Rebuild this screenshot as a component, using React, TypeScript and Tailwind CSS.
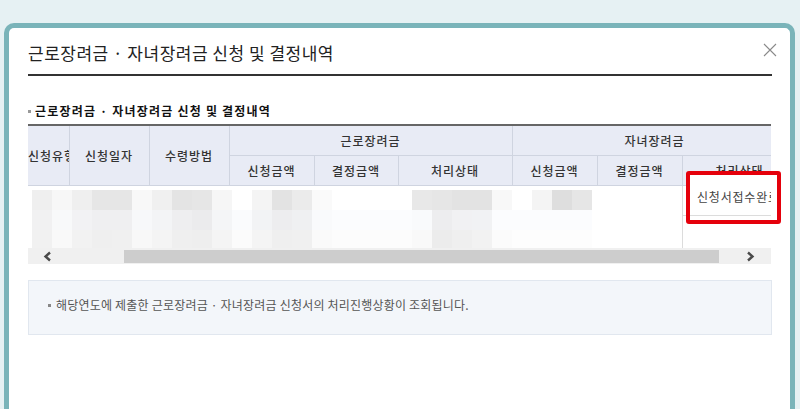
import React from 'react';

const rowA = [
  'bg-[#efefef]', 'bg-[#f7f7f7]', 'bg-[#efefef]', 'bg-[#e6e6e6]', 'bg-[#e6e6e6]', 'bg-[#f8f8f8]', 'bg-[#f0f0f0]',
  'bg-[#e4e4e4]', 'bg-[#e6e6e6]', 'bg-[#f6f6f6]', 'bg-[#ffffff]', 'bg-[#f4f4f4]', 'bg-[#e3e3e3]', 'bg-[#ebebeb]',
  'bg-[#fafafa]', 'bg-[#ffffff]', 'bg-[#ffffff]', 'bg-[#ffffff]', 'bg-[#ffffff]', 'bg-[#e8e8e8]', 'bg-[#e6e6e6]',
  'bg-[#e3e3e3]', 'bg-[#e3e3e3]', 'bg-[#f8f8f8]', 'bg-[#ffffff]', 'bg-[#f4f4f4]', 'bg-[#dedede]', 'bg-[#e6e6e6]',
];
const rowB = [
  'bg-[#f1f1f2]', 'bg-[#f8f9fa]', 'bg-[#f2f2f4]', 'bg-[#efeff1]', 'bg-[#efeff1]', 'bg-[#f7f8fa]', 'bg-[#f3f4f6]',
  'bg-[#eeeef0]', 'bg-[#ebebed]', 'bg-[#f4f5f7]', 'bg-[#fafbfd]', 'bg-[#f2f3f5]', 'bg-[#ededef]', 'bg-[#eff0f2]',
  'bg-[#f9fafc]', 'bg-[#fbfcfe]', 'bg-[#fbfcfe]', 'bg-[#fbfcfe]', 'bg-[#fbfcfe]', 'bg-[#f9fafc]', 'bg-[#ededef]',
  'bg-[#f1f1f3]', 'bg-[#f1f2f4]', 'bg-[#fbfcfe]', 'bg-[#fbfcfe]', 'bg-[#fbfcfe]', 'bg-[#fbfcfe]', 'bg-[#fbfcfe]',
];
const rowC = [
  'bg-[#f1f1f1]', 'bg-[#f9f9f9]', 'bg-[#f2f2f2]', 'bg-[#efefef]', 'bg-[#f0f0f0]', 'bg-[#f8f8f8]', 'bg-[#f4f4f4]',
  'bg-[#efefef]', 'bg-[#eeeeee]', 'bg-[#f4f4f4]', 'bg-[#fbfbfb]', 'bg-[#f4f4f4]', 'bg-[#efefef]', 'bg-[#f0f0f0]',
  'bg-[#fafafa]', 'bg-[#fcfcfc]', 'bg-[#fcfcfc]', 'bg-[#fcfcfc]', 'bg-[#fcfcfc]', 'bg-[#f9f9f9]', 'bg-[#ececec]',
  'bg-[#efefef]', 'bg-[#f2f2f2]', 'bg-[#fbfbfb]', 'bg-[#fdfdfd]', 'bg-[#fdfdfd]', 'bg-[#fdfdfd]', 'bg-[#fdfdfd]',
];

const font = "font-['Noto_Sans_CJK_KR','Noto_Sans',sans-serif]";
const th = 'border border-[#cfd4e0] bg-[#e8ebf5] text-[12px] font-medium text-[#333] tracking-[1px] whitespace-nowrap overflow-hidden p-0';

export default function App() {
  return (
    <div className={`w-[800px] h-[409px] overflow-hidden bg-[#e6f1f3] pt-[23px] pl-[4px] ${font}`}>
      <div className="relative w-[791px] h-[400px] rounded-t-[10px] border-[5px] border-b-0 border-[#7ab4b9] bg-white pl-[19px] pr-[18px]">
        {/* header */}
        <div className="flex items-center justify-between border-b-2 border-[#333] pt-[13px] pb-[9px]">
          <h1 className="text-[17px] leading-[24px] text-[#222] tracking-[0.5px]">근로장려금 · 자녀장려금 신청 및 결정내역</h1>
          <button className="-mr-[5px] mb-[6px] text-[#8a8a8a]">
            <svg width="14" height="14" viewBox="0 0 14 14" stroke="currentColor" strokeWidth="1.1">
              <path d="M1 1L13 13M13 1L1 13" />
            </svg>
          </button>
        </div>

        <div className="mt-[27px] mb-[5px] flex items-center gap-[4px] text-[12px] leading-[16px] font-bold text-[#111] tracking-[1.2px]">
          <span className="w-[3px] h-[3px] bg-[#999]" />
          <span>근로장려금 · 자녀장려금 신청 및 결정내역</span>
        </div>

        {/* table */}
        <div className="w-[743px] overflow-hidden border-t-2 border-[#666]">
          <table className="table-fixed border-collapse w-[769px] -mt-px">
            <colgroup>
              <col className="w-[41px]" />
              <col className="w-[80px]" />
              <col className="w-[80px]" />
              <col className="w-[85px]" />
              <col className="w-[84px]" />
              <col className="w-[114px]" />
              <col className="w-[85px]" />
              <col className="w-[85px]" />
              <col className="w-[115px]" />
            </colgroup>
            <thead>
              <tr className="h-[30px]">
                <th rowSpan={2} className={`${th} border-l-0 text-left`}>신청유형</th>
                <th rowSpan={2} className={th}>신청일자</th>
                <th rowSpan={2} className={th}>수령방법</th>
                <th colSpan={3} className={th}>근로장려금</th>
                <th colSpan={3} className={th}>자녀장려금</th>
              </tr>
              <tr className="h-[30px]">
                <th className={th}>신청금액</th>
                <th className={th}>결정금액</th>
                <th className={th}>처리상태</th>
                <th className={th}>신청금액</th>
                <th className={th}>결정금액</th>
                <th className={th}>처리상태</th>
              </tr>
            </thead>
          </table>
          <div className="flex h-[62px]">
            <div className="w-[654px] shrink-0 pt-[4px] pl-[4px] flex flex-col">
              {[{ r: rowA, h: 'h-[20px]' }, { r: rowB, h: 'h-[20px]' }, { r: rowC, h: 'h-[18px]' }].map((row, i) => (
                <div key={i} className="flex">
                  {row.r.map((c, j) => (
                    <div key={j} className={`w-[20px] ${row.h} ${c}`} />
                  ))}
                </div>
              ))}
            </div>
            <div className="w-[115px] shrink-0 border-l border-[#dcdcdc] flex flex-col">
              <div className="h-[30px] border-b border-[#dcdcdc]" />
              <div className="flex-1" />
            </div>
          </div>
          {/* scrollbar */}
          <div className="flex items-center h-[16px] bg-[#f0f0f0]">
            <div className="w-[96px] shrink-0 flex items-center pl-[15px]">
              <svg width="9" height="11" viewBox="0 0 9 11" fill="none" stroke="#4a4a4a" strokeWidth="2.4">
                <path d="M7 1.5L2.5 5.5L7 9.5" />
              </svg>
            </div>
            <div className="w-[595px] shrink-0 h-[13px] bg-[#cdcdcd]" />
            <div className="flex-1 flex items-center justify-end pr-[16px]">
              <svg width="9" height="11" viewBox="0 0 9 11" fill="none" stroke="#4a4a4a" strokeWidth="2.4">
                <path d="M2 1.5L6.5 5.5L2 9.5" />
              </svg>
            </div>
          </div>
        </div>

        {/* red highlight */}
        <div className="absolute left-[677px] top-[143px] w-[95px] h-[53px] rounded-[3px] border-[4px] border-[#e5000b] bg-white">
          <div className="w-[81px] overflow-hidden">
            <div className="h-[41px] border-b border-[#dcdcdc] flex items-center pl-[7px] pt-[3px]">
              <span className="text-[12px] text-[#444] tracking-[0.8px] whitespace-nowrap">신청서접수완료</span>
            </div>
          </div>
        </div>

        {/* info box */}
        <div className="mt-[16px] h-[55px] border border-[#e1e7ef] bg-[#f3f6fa] pt-[15px] pl-[19px]">
          <div className="flex items-center gap-[5px] text-[12px] leading-[18px] text-[#555] tracking-[0.2px]">
            <span className="w-[3px] h-[3px] bg-[#888]" />
            <span>해당연도에 제출한 근로장려금 · 자녀장려금 신청서의 처리진행상황이 조회됩니다.</span>
          </div>
        </div>
      </div>
    </div>
  );
}
